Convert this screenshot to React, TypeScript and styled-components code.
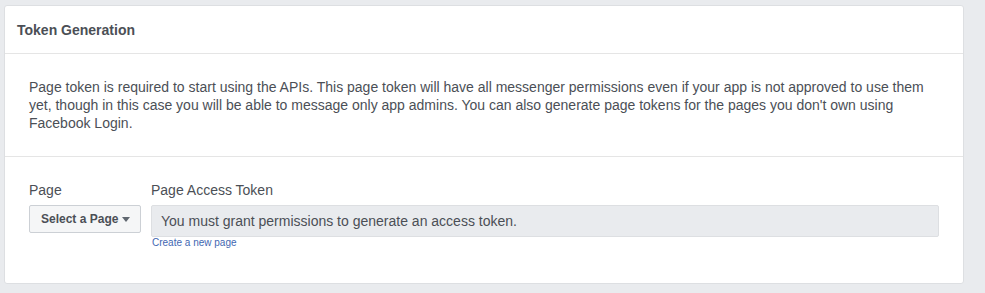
import React from "react";
import styled, { createGlobalStyle } from "styled-components";

const Global = createGlobalStyle`
  html, body { margin: 0; padding: 0; background: #e9ebee; }
  body { font-family: "Liberation Sans", Arial, Helvetica, sans-serif; }
  #root { padding: 5px 0 0 4px; }
`;

const Card = styled.section`
  box-sizing: border-box;
  width: 960px;
  height: 279px;
  background: #fff;
  border: 1px solid #dddfe2;
  border-radius: 3px;
  display: flex;
  flex-direction: column;
`;

const Header = styled.header`
  height: 47px;
  display: flex;
  align-items: center;
  padding: 0 12px;
  border-bottom: 1px solid #e5e5e5;
  font-size: 14px;
  font-weight: bold;
  color: #4b4f56;
`;

const Section = styled.div<{ $last?: boolean }>`
  padding: 24px;
  border-bottom: ${(p) => (p.$last ? "none" : "1px solid #e5e5e5")};
  font-size: 14px;
  line-height: 18px;
  color: #4b4f56;
`;

const Grid = styled.div`
  display: grid;
  grid-template-columns: 112px 1fr;
  column-gap: 10px;
  row-gap: 6px;
`;

const Label = styled.div`
  font-size: 14px;
  line-height: 18px;
  color: #4b4f56;
`;

const Field = styled.div`
  display: flex;
  flex-direction: column;
`;

const SelectButton = styled.button`
  box-sizing: border-box;
  height: 28px;
  width: 112px;
  padding: 0 8px 0 11px;
  display: flex;
  align-items: center;
  gap: 4px;
  background: #f5f6f7;
  border: 1px solid #ccd0d5;
  border-radius: 2px;
  font-family: inherit;
  font-size: 12px;
  font-weight: bold;
  color: #4b4f56;
  cursor: pointer;
`;

const Caret = styled.span`
  width: 0;
  height: 0;
  border-left: 4.5px solid transparent;
  border-right: 4.5px solid transparent;
  border-top: 5px solid #606770;
  margin-top: 1px;
`;

const TokenBox = styled.div`
  box-sizing: border-box;
  height: 32px;
  display: flex;
  align-items: center;
  padding: 0 9px;
  background: #e9ebee;
  border: 1px solid #dddfe2;
  border-radius: 2px;
  font-size: 14px;
  color: #4b4f56;
`;

const Link = styled.a`
  padding-left: 1px;
  font-size: 10px;
  line-height: 12px;
  color: #4267b2;
  text-decoration: none;
`;

export default function App() {
  return (
    <>
      <Global />
      <Card>
        <Header>Token Generation</Header>
        <Section>
          Page token is required to start using the APIs. This page token will have all messenger permissions even if
          your app is not approved to use them yet, though in this case you will be able to message only app admins. You
          can also generate page tokens for the pages you don't own using Facebook Login.
        </Section>
        <Section $last>
          <Grid>
            <Label>Page</Label>
            <Label>Page Access Token</Label>
            <div>
              <SelectButton>
                Select a Page <Caret />
              </SelectButton>
            </div>
            <Field>
              <TokenBox>You must grant permissions to generate an access token.</TokenBox>
              <Link href="#">Create a new page</Link>
            </Field>
          </Grid>
        </Section>
      </Card>
    </>
  );
}
